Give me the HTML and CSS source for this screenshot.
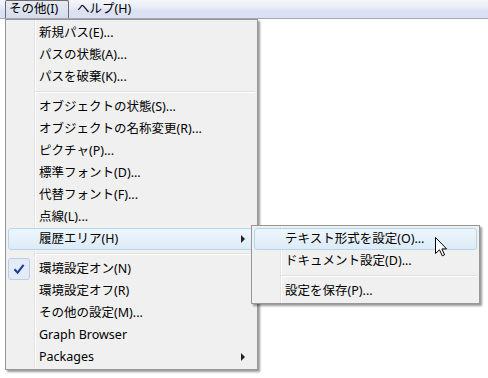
FILE: index.html
```html
<!DOCTYPE html>
<html lang="ja">
<head>
    <meta charset="UTF-8">
    <title>その他メニュー</title>
    <link rel="stylesheet" href="styles.css">
</head>
<body>
<div class="window">
    <div class="menubar">
        <span class="top-item open">その他(I)</span>
        <span class="top-item">ヘルプ(H)</span>
    </div>
    <div class="client"></div>

    <div class="menu main-menu">
        <div class="item"><span class="icon"></span><span class="label">新規パス(E)...</span></div>
        <div class="item"><span class="icon"></span><span class="label">パスの状態(A)...</span></div>
        <div class="item"><span class="icon"></span><span class="label">パスを破棄(K)...</span></div>
        <div class="sep"></div>
        <div class="item"><span class="icon"></span><span class="label">オブジェクトの状態(S)...</span></div>
        <div class="item"><span class="icon"></span><span class="label">オブジェクトの名称変更(R)...</span></div>
        <div class="item"><span class="icon"></span><span class="label">ピクチャ(P)...</span></div>
        <div class="item"><span class="icon"></span><span class="label">標準フォント(D)...</span></div>
        <div class="item"><span class="icon"></span><span class="label">代替フォント(F)...</span></div>
        <div class="item"><span class="icon"></span><span class="label">点線(L)...</span></div>
        <div class="item hot"><span class="icon"></span><span class="label">履歴エリア(H)</span><span class="arrow"></span></div>
        <div class="sep"></div>
        <div class="item"><span class="icon checked">
            <svg width="14" height="14" viewBox="0 0 14 14"><path d="M2.5 7.2 L5.6 10.6 L11.6 2.8" fill="none" stroke="#1f3f99" stroke-width="2.1"/></svg>
        </span><span class="label">環境設定オン(N)</span></div>
        <div class="item"><span class="icon"></span><span class="label">環境設定オフ(R)</span></div>
        <div class="item"><span class="icon"></span><span class="label">その他の設定(M)...</span></div>
        <div class="item"><span class="icon"></span><span class="label">Graph Browser</span></div>
        <div class="item"><span class="icon"></span><span class="label">Packages</span><span class="arrow"></span></div>
    </div>

    <div class="menu sub-menu">
        <div class="item hot"><span class="icon"></span><span class="label">テキスト形式を設定(O)...</span></div>
        <div class="item"><span class="icon"></span><span class="label">ドキュメント設定(D)...</span></div>
        <div class="sep"></div>
        <div class="item"><span class="icon"></span><span class="label">設定を保存(P)...</span></div>
    </div>

    <svg class="cursor" width="13" height="20" viewBox="0 0 13 20">
        <path d="M0.5 0.5 L0.5 16.5 L4.5 12.8 L7.3 18.8 L9.6 17.8 L6.9 11.9 L11.6 11.9 Z" fill="#fff" stroke="#000" stroke-width="1"/>
    </svg>
</div>
</body>
</html>
```

FILE: styles.css
```css
*{margin: 0;padding: 0;box-sizing: border-box;}

body{
    background: #fff;
    font-family: "Noto Sans", "Noto Sans CJK JP", sans-serif;
    font-size: 12.5px;
    color: #000;
}

.window{
    position: relative;
    width: 488px;
    height: 378px;
    overflow: hidden;
}

/* menu bar */
.menubar{
    display: flex;
    align-items: stretch;
    height: 19px;
    padding-left: 5px;
    gap: 4px;
    background: linear-gradient(#f4f6fb 0%, #e9edf8 40%, #dbe1f3 60%, #dbe1f3 100%);
    border-bottom: 1px solid #a4a8b6;
}
.menubar .top-item{
    display: flex;
    align-items: center;
    padding: 0 3px 1px 3px;
    line-height: 16px;
    border: 1px solid transparent;
}
.menubar .top-item.open{
    width: 64px;
    border-color: #6b6b6b;
    border-bottom: 0;
    border-radius: 2px 2px 0 0;
    background: linear-gradient(#e6e9f2, #d6dcec);
}

.client{
    height: 359px;
    background: #fff;
}

/* popup menus */
.menu{
    position: absolute;
    display: flex;
    flex-direction: column;
    padding: 2px 2px 1px;
    border: 1px solid #979797;
    background:
        linear-gradient(to right, transparent 28px, #e2e3e3 28px, #e2e3e3 29px, #fff 29px, #fff 30px, transparent 30px),
        #f0f0f0;
    box-shadow: 2px 2px 2px rgba(0, 0, 0, .4);
}
.main-menu{
    left: 5px;
    top: 19px;
    width: 253px;
}
.sub-menu{
    left: 251px;
    top: 225px;
    width: 229px;
}

.menu .item{
    display: flex;
    align-items: center;
    height: 22px;
    line-height: 16px;
    white-space: nowrap;
    border: 1px solid transparent;
    border-radius: 3px;
}
.menu .item.hot{
    border-color: #b0d9ef;
    background: linear-gradient(#eef6fc, #dcebf7);
}
.menu .item .icon{
    display: flex;
    align-items: center;
    justify-content: center;
    width: 22px;
    height: 22px;
    margin: -1px 9px -1px -1px;
    flex: none;
}
.menu .item .icon.checked{
    border: 1px solid #bccde8;
    border-radius: 3px;
    background: #e3ebf7;
}
.menu .item .label{
    flex: 1;
}
.menu .item .arrow{
    width: 0;
    height: 0;
    margin-right: 9px;
    border-top: 4px solid transparent;
    border-bottom: 4px solid transparent;
    border-left: 4px solid #222;
}

.menu .sep{
    height: 8px;
    margin-left: 27px;
    background: linear-gradient(transparent 3px, #e0e0e0 3px, #e0e0e0 4px, #fff 4px, #fff 5px, transparent 5px);
}

.cursor{
    position: absolute;
    left: 435px;
    top: 237px;
}
```
